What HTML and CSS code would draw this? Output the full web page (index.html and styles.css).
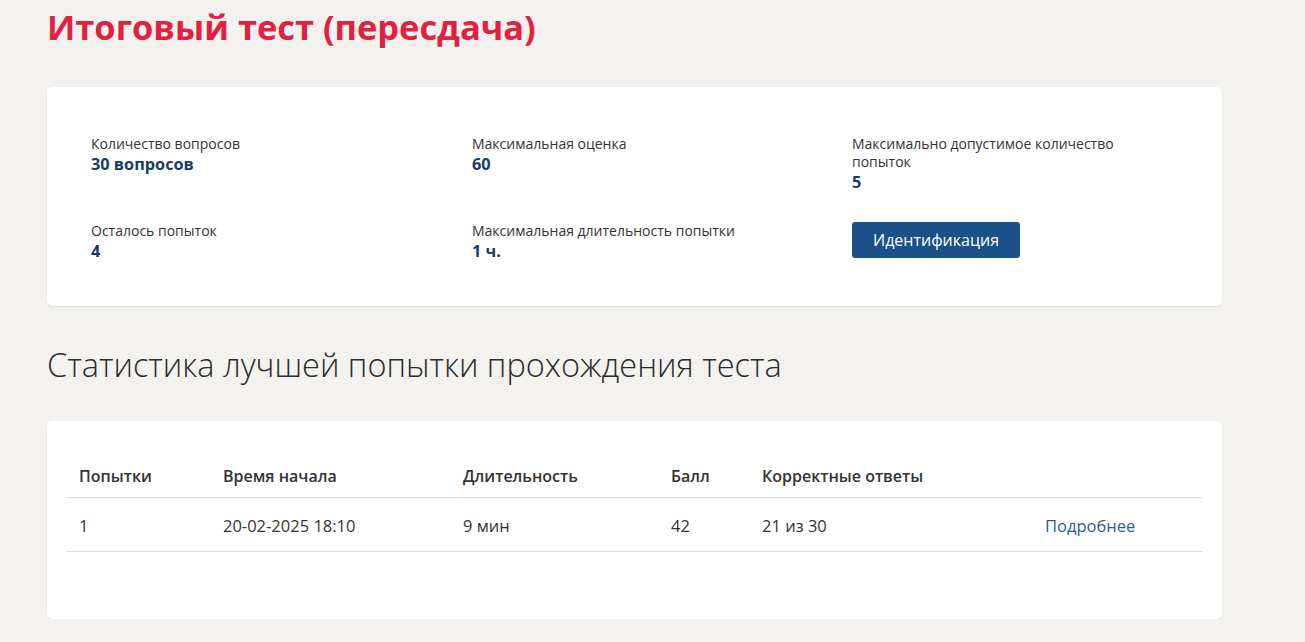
FILE: index.html
```html
<!DOCTYPE html>
<html lang="ru">
<head>
<meta charset="utf-8">
<title>Итоговый тест (пересдача)</title>
<link rel="stylesheet" href="styles.css">
</head>
<body>
<main class="page">
  <h1 class="title">Итоговый тест (пересдача)</h1>

  <section class="card info-card">
    <div class="info-grid">
      <div class="info-item">
        <div class="label">Количество вопросов</div>
        <div class="value">30 вопросов</div>
      </div>
      <div class="info-item">
        <div class="label">Максимальная оценка</div>
        <div class="value">60</div>
      </div>
      <div class="info-item">
        <div class="label">Максимально допустимое количество попыток</div>
        <div class="value">5</div>
      </div>
      <div class="info-item">
        <div class="label">Осталось попыток</div>
        <div class="value">4</div>
      </div>
      <div class="info-item">
        <div class="label">Максимальная длительность попытки</div>
        <div class="value">1 ч.</div>
      </div>
      <div class="info-item">
        <button class="btn" type="button">Идентификация</button>
      </div>
    </div>
  </section>

  <h2 class="subtitle">Статистика лучшей попытки прохождения теста</h2>

  <section class="card table-card">
    <table class="stats">
      <colgroup>
        <col class="c1"><col class="c2"><col class="c3"><col class="c4"><col class="c5"><col class="c6">
      </colgroup>
      <thead>
        <tr>
          <th>Попытки</th>
          <th>Время начала</th>
          <th>Длительность</th>
          <th>Балл</th>
          <th>Корректные ответы</th>
          <th></th>
        </tr>
      </thead>
      <tbody>
        <tr>
          <td>1</td>
          <td>20-02-2025 18:10</td>
          <td>9 мин</td>
          <td>42</td>
          <td>21 из 30</td>
          <td><a class="more" href="#">Подробнее</a></td>
        </tr>
      </tbody>
    </table>
  </section>
</main>
</body>
</html>
```

FILE: styles.css
```css
html, body {
  margin: 0;
  padding: 0;
}
body {
  background: #f3f2ef;
  font-family: "Open Sans", "Noto Sans", "Liberation Sans", sans-serif;
  color: #333333;
}
.page {
  width: 1175px;
  margin-left: 47px;
  padding-top: 5px;
}
.title {
  margin: 0;
  font-size: 34.4px;
  line-height: 44px;
  font-weight: 700;
  color: #e4203f;
}
.card {
  background: #ffffff;
  border-radius: 5px;
  box-shadow: 0 1px 2px rgba(0, 0, 0, 0.09);
}
.info-card {
  margin-top: 38px;
  padding: 48px 44px 44px 44px;
}
.info-grid {
  display: grid;
  grid-template-columns: 381px 380px 300px;
  row-gap: 29px;
}
.label {
  font-size: 14px;
  line-height: 18px;
  color: #333333;
}
.value {
  font-size: 16.3px;
  line-height: 22px;
  font-weight: 700;
  color: #173c6c;
}
.btn {
  height: 36px;
  padding: 0 21px;
  border: none;
  border-radius: 3px;
  background: #1c5089;
  color: #ffffff;
  font-family: inherit;
  font-size: 16px;
  line-height: 36px;
}
.subtitle {
  margin: 39px 0 0 0;
  font-size: 32.5px;
  line-height: 40px;
  font-weight: 300;
  color: #2b2b2b;
}
.table-card {
  margin-top: 36px;
  padding: 30px 20px 67px 19px;
}
.stats {
  width: 100%;
  border-collapse: collapse;
  table-layout: fixed;
  font-size: 16px;
}
.c1 { width: 144px; }
.c2 { width: 240px; }
.c3 { width: 208px; }
.c4 { width: 91px; }
.c5 { width: 283px; }
.stats th {
  text-align: left;
  font-weight: 600;
  padding: 15px 13px 10px 13px;
  line-height: 21px;
  color: #333333;
  border-bottom: 1px solid #dedede;
}
.stats td {
  padding: 16px 13px 13px 13px;
  line-height: 24px;
  font-size: 16.5px;
  color: #333333;
  border-bottom: 1px solid #dedede;
}
.more {
  color: #2a5c93;
  text-decoration: none;
}
```
